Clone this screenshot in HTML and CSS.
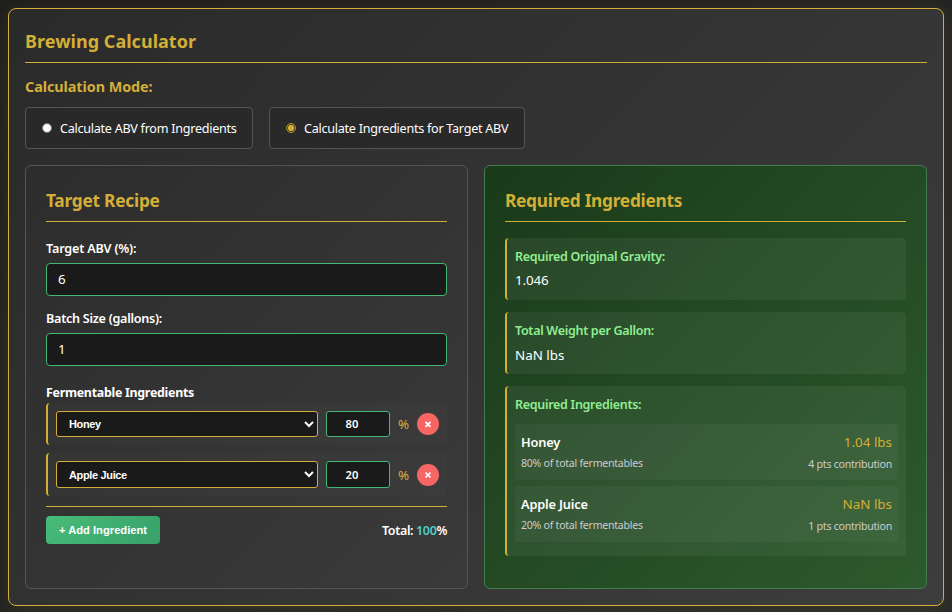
FILE: index.html
```
<!DOCTYPE html>
<html lang="en">
<head>
<meta charset="utf-8">
<title>Brewing Calculator</title>
<link rel="stylesheet" href="styles.css">
</head>
<body>
<main class="calculator">
  <h2 class="page-title">Brewing Calculator</h2>
  <h3 class="mode-title">Calculation Mode:</h3>
  <div class="modes">
    <label class="mode"><input type="radio" name="mode"><span>Calculate ABV from Ingredients</span></label>
    <label class="mode"><input type="radio" name="mode" checked><span>Calculate Ingredients for Target ABV</span></label>
  </div>
  <div class="columns">
    <section class="panel">
      <h3 class="panel-title">Target Recipe</h3>
      <label class="field-label wide" for="abv">Target ABV (%):</label>
      <input class="field" id="abv" type="number" value="6">
      <label class="field-label" for="batch">Batch Size (gallons):</label>
      <input class="field" id="batch" type="number" value="1">
      <h4 class="list-title">Fermentable Ingredients</h4>
      <div class="row">
        <select class="kind"><option>Honey</option></select>
        <input class="share" type="number" value="80">
        <span class="percent">%</span>
        <button class="remove" aria-label="Remove"><svg width="8" height="8" viewBox="0 0 8 8"><path d="M1.5 1.9 6.5 6.9M6.5 1.9 1.5 6.9"/></svg></button>
      </div>
      <div class="row row-last">
        <select class="kind"><option>Apple Juice</option></select>
        <input class="share" type="number" value="20">
        <span class="percent">%</span>
        <button class="remove" aria-label="Remove"><svg width="8" height="8" viewBox="0 0 8 8"><path d="M1.5 1.5 6.5 6.5M6.5 1.5 1.5 6.5"/></svg></button>
      </div>
      <div class="summary">
        <button class="add">+ Add Ingredient</button>
        <span class="total">Total: <span class="ok">100</span>%</span>
      </div>
    </section>
    <section class="panel results">
      <h3 class="panel-title">Required Ingredients</h3>
      <div class="card">
        <div class="card-label">Required Original Gravity:</div>
        <div class="card-value first">1.046</div>
      </div>
      <div class="card">
        <div class="card-label">Total Weight per Gallon:</div>
        <div class="card-value">NaN lbs</div>
      </div>
      <div class="card card-list">
        <div class="card-label">Required Ingredients:</div>
        <div class="item">
          <div><div class="name">Honey</div><div class="note">80% of total fermentables</div></div>
          <div class="amounts"><div class="amount">1.04 lbs</div><div class="note points">4 pts contribution</div></div>
        </div>
        <div class="item">
          <div><div class="name">Apple Juice</div><div class="note">20% of total fermentables</div></div>
          <div class="amounts"><div class="amount">NaN lbs</div><div class="note points">1 pts contribution</div></div>
        </div>
      </div>
    </section>
  </div>
</main>
</body>
</html>
```
FILE: styles.css
```
* { box-sizing: border-box; }
html { height: 100%; overflow: hidden; }
body {
  margin: 0;
  height: 612px;
  padding: 8px 8px 6px;
  background: linear-gradient(135deg, #1e1e1e, #282828);
  color: #fff;
  font-family: "Noto Sans", sans-serif;
  font-size: 12.6px;
  letter-spacing: -0.27px;
}
h2, h3, h4 { margin: 0; font-weight: 700; }
button, input, select { margin: 0; font-family: inherit; }

.calculator {
  height: 598px;
  padding: 16px;
  border: 1px solid #d4af37;
  border-radius: 8px;
  background: linear-gradient(135deg, #2a2a2a, #3d3d3d);
  box-shadow: 0 4px 20px rgba(212, 175, 55, 0.13);
}
.page-title {
  height: 38px;
  line-height: 33px;
  border-bottom: 1px solid #d4af37;
  color: #d4af37;
  font-size: 18px;
  letter-spacing: 0.03px;
}
.mode-title {
  margin-top: 14px;
  height: 20px;
  line-height: 20px;
  color: #d4af37;
  font-size: 14.4px;
  letter-spacing: -0.07px;
}
.modes { display: flex; gap: 16px; margin-top: 10px; }
.mode {
  display: flex;
  align-items: center;
  gap: 8px;
  width: 228px;
  height: 42px;
  padding: 0 16px;
  border: 1px solid #555;
  border-radius: 4px;
  background: #292929;
  white-space: nowrap;
}
.mode + .mode { width: 256px; }
.mode input {
  appearance: none;
  flex: none;
  width: 10px;
  height: 10px;
  border: 1px solid #777;
  border-radius: 50%;
  background: #fff;
}
.mode input:checked {
  border-color: #b0922f;
  background: radial-gradient(circle, #d4af37 2.7px, #4a3f22 3.5px);
}

.columns { display: grid; grid-template-columns: 443px 443px; gap: 16px; margin-top: 16px; }
.panel {
  height: 424px;
  padding: 20px;
  border: 1px solid #555;
  border-radius: 6px;
  background: linear-gradient(135deg, #2d2d2d, #3a3a3a);
}
.results { border-color: #427c4f; background: linear-gradient(135deg, #1a3a1a, #2d5a2d); }
.panel-title {
  height: 36px;
  line-height: 30px;
  border-bottom: 1px solid #d4af37;
  color: #d4af37;
  font-size: 17.3px;
  letter-spacing: -0.23px;
}
.results .panel-title { letter-spacing: -0.27px; }

.field-label { display: block; margin-top: 17px; height: 20px; line-height: 20px; font-weight: 600; }
.wide { letter-spacing: -0.19px; }
.field + .field-label { margin-top: 13px; }
.field {
  display: block;
  width: 401px;
  height: 33px;
  margin-top: 4px;
  padding: 0 11px 2px;
  border: 1px solid #42b872;
  border-radius: 4px;
  background: #1a1a1a;
  color: #fff;
  font-size: 13.3px;
}
.list-title { margin-top: 16px; height: 21px; line-height: 21px; font-size: 12.4px; }
.row {
  display: flex;
  align-items: center;
  gap: 8px;
  height: 42px;
  padding: 0 8px;
  border-left: 2px solid #d4af37;
  border-radius: 4px;
  background: rgba(255, 255, 255, 0.015);
}
.row-last { height: 43px; margin-top: 8px; }
.kind, .share {
  height: 26px;
  border: 1px solid #d4af37;
  border-radius: 3px;
  background: #1a1a1a;
  color: #fff;
  font-weight: 700;
}
.row-last .kind, .row-last .share { height: 27px; }
.kind { width: 262px; padding: 4px 8px; font-family: "Liberation Sans", sans-serif; font-size: 11px; letter-spacing: -0.35px; }
.share { width: 64px; padding: 0 4px 1px 7px; border-color: #42b872; font-size: 11.2px; font-weight: 600; text-align: center; letter-spacing: 0; }
.percent { width: 11px; color: #d4af37; font-size: 13.4px; }
.remove {
  display: grid;
  place-items: center;
  width: 22px;
  height: 22px;
  padding: 0;
  border: 0;
  border-radius: 50%;
  background: #f76565;
}
.remove path { fill: none; stroke: #fff; stroke-width: 1.7; }
.summary {
  display: flex;
  align-items: center;
  justify-content: space-between;
  margin-top: 10px;
  padding-top: 9px;
  border-top: 1px solid #d4af37;
}
.add {
  width: 114px;
  height: 28px;
  padding: 0;
  border: 0;
  border-radius: 4px;
  background: linear-gradient(135deg, #48bb78, #38a169);
  color: #fff;
  font: 700 11.2px "Liberation Sans", sans-serif;
}
.total { font-size: 12.5px; font-weight: 600; letter-spacing: -0.36px; }
.ok { color: #4ecdc4; }

.card {
  height: 62px;
  margin-top: 12px;
  padding: 9px 8px 8px;
  border-left: 2px solid #d4af37;
  border-radius: 4px;
  background: rgba(255, 255, 255, 0.055);
}
.panel-title + .card { margin-top: 16px; }
.card-list { height: 170px; }
.card-label { height: 20px; line-height: 20px; color: #90ee90; font-size: 12.5px; font-weight: 600; letter-spacing: -0.3px; }
.card-value { margin-top: 4px; line-height: 20px; font-size: 13.4px; letter-spacing: 0; }
.first { margin-top: 3px; letter-spacing: -0.15px; }
.item {
  display: flex;
  justify-content: space-between;
  height: 56px;
  margin-top: 6px;
  padding: 8px 6px;
  border-radius: 3px;
  background: rgba(255, 255, 255, 0.04);
}
.card-label + .item { margin-top: 9px; }
.name { height: 20px; line-height: 21px; font-size: 12.8px; font-weight: 600; letter-spacing: -0.18px; }
.note { height: 20px; margin-top: 1px; line-height: 20px; color: #ccc; font-size: 10.6px; letter-spacing: -0.27px; }
.amounts { text-align: right; }
.amount { height: 20px; line-height: 20px; color: #d4af37; font-size: 13.4px; letter-spacing: 0; }
.points { margin-top: 2px; }
```
